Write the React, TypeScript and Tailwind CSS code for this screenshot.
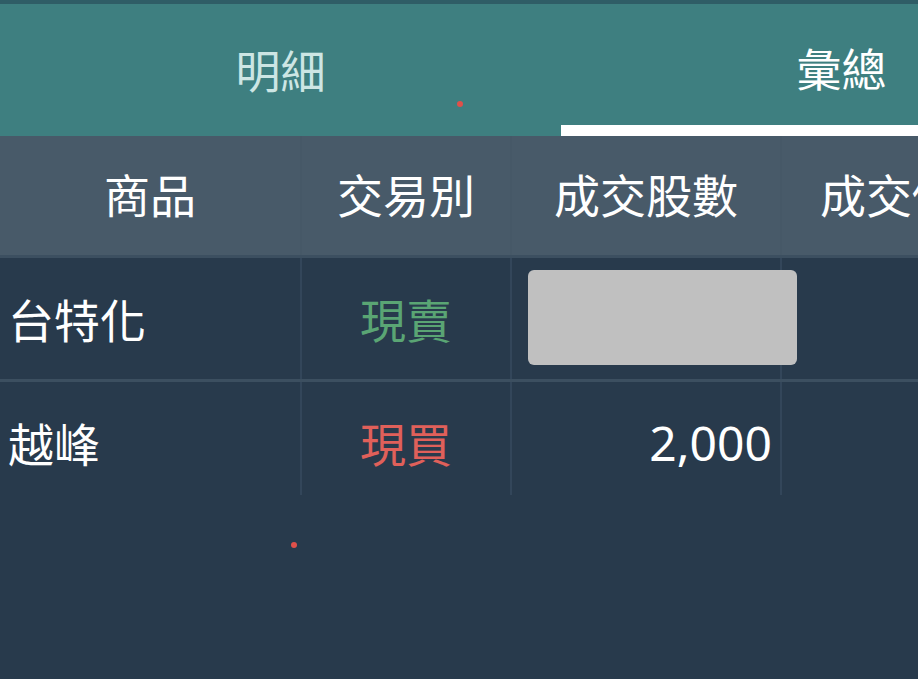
import React from 'react';

type Row = {
  name: string;
  side: '現賣' | '現買';
  qty: string | null;
};

const rows: Row[] = [
  { name: '台特化', side: '現賣', qty: null },
  { name: '越峰', side: '現買', qty: '2,000' },
];

const font = { fontFamily: '"Noto Sans CJK TC", "Noto Sans", sans-serif' };

const App: React.FC = () => {
  return (
    <div className="w-[918px] h-[679px] overflow-hidden bg-[#283a4c] relative" style={font}>
      <div className="h-[4px] bg-[#2f5d66]" />

      {/* tabs */}
      <div className="w-[1122px] h-[132px] bg-[#3e7f80] flex relative">
        <div className="w-[561px] flex items-center justify-center pb-[2px]">
          <span className="text-[45px] leading-none text-[#cde6e4]">明細</span>
        </div>
        <div className="w-[561px] flex flex-col">
          <div className="flex-1 flex items-center justify-center pt-[6px]">
            <span className="text-[45px] leading-none text-white">彙總</span>
          </div>
          <div className="h-[11px] bg-white" />
        </div>
        <span className="absolute left-[457px] top-[97px] w-[6px] h-[6px] rounded-full bg-[#e0504a]" />
      </div>

      {/* header */}
      <div className="w-[1122px] h-[122px] bg-[#485a69] flex border-b-[3px] border-[#3c4f60] text-[46px] text-white">
        <div className="w-[300px] flex items-center justify-center pb-[4px]">商品</div>
        <div className="w-[210px] border-l-2 border-[#43556450] flex items-center justify-center pb-[4px]">交易別</div>
        <div className="w-[270px] border-l-2 border-[#43556450] flex items-center justify-center pb-[4px]">成交股數</div>
        <div className="w-[270px] border-l-2 border-[#43556450] flex items-center pl-[38px] pb-[4px] whitespace-nowrap">成交價格</div>
      </div>

      {/* body */}
      <div className="w-[1122px]">
        {rows.map((row, i) => {
          const pad = i === 0 ? '' : 'pt-[8px]';
          return (
            <div
              key={row.name}
              className={`flex ${i === 0 ? 'h-[124px] border-b-[3px] border-[#3c4f60]' : 'h-[113px]'}`}
            >
              <div className={`w-[300px] flex items-center pl-[8px] text-[46px] text-white ${pad}`}>{row.name}</div>
              <div
                className={`w-[210px] border-l-2 border-[#33465a] flex items-center justify-center text-[46px] ${pad} ${
                  row.side === '現賣' ? 'text-[#5aa574]' : 'text-[#e0605a]'
                }`}
              >
                {row.side}
              </div>
              <div className={`w-[270px] border-l-2 border-[#33465a] flex items-center justify-end pr-[8px] relative ${pad}`}>
                {row.qty ? (
                  <span className="text-[48px] text-white" style={{ fontFamily: '"Noto Sans", sans-serif' }}>
                    {row.qty}
                  </span>
                ) : (
                  <span className="absolute left-[16px] top-[12px] w-[269px] h-[95px] rounded-[6px] bg-[#c0c0c0]" />
                )}
              </div>
              <div className="w-[270px] border-l-2 border-[#33465a]" />
            </div>
          );
        })}
      </div>

      <span className="absolute left-[291px] top-[542px] w-[6px] h-[6px] rounded-full bg-[#e0504a]" />
    </div>
  );
};

export default App;
